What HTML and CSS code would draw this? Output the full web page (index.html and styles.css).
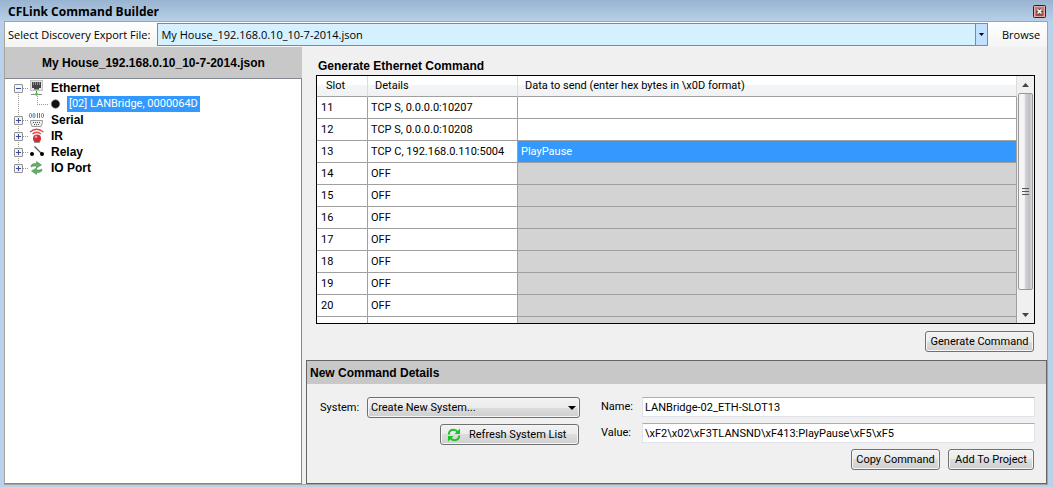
FILE: index.html
```html
<!DOCTYPE html>
<html lang="en">
<head>
  <meta charset="UTF-8">
  <meta name="viewport" content="width=device-width, initial-scale=1.0">
  <title>CFLink Command Builder</title>
  <link rel="stylesheet" href="styles.css">
</head>
<body>
  <header class="titlebar">
    <h1>CFLink Command Builder</h1>
    <button class="close" aria-label="Close">
      <svg width="13" height="13" viewBox="0 0 13 13">
        <rect x=".5" y=".5" width="12" height="12" rx="1" fill="#c08078" stroke="#42182a"/>
        <rect x="1.5" y="1.5" width="10" height="10" fill="none" stroke="#e0aaa0"/>
        <rect x="3" y="6" width="7" height="5" fill="#b04a38"/>
        <path d="M4.500 4.500l4 4M8.500 4.500l-4 4" stroke="#4a4a62" stroke-width="3.600"/>
        <path d="M4.500 4.500l4 4M8.500 4.500l-4 4" stroke="#fff" stroke-width="1.600"/>
      </svg>
    </button>
  </header>

  <div class="window">
    <div class="toolbar">
      <label for="file">Select Discovery Export File:</label>
      <div class="combo">
        <select id="file">
          <option>My House_192.168.0.10_10-7-2014.json</option>
        </select>
        <span class="combo-arrow"><svg width="5" height="3" viewBox="0 0 5 3"><path d="M0 0h5L2.500 3z"/></svg></span>
      </div>
      <button class="browse">Browse</button>
    </div>

    <div class="content">
      <aside class="sidebar">
        <h2>My House_192.168.0.10_10-7-2014.json</h2>
        <ul class="tree">
          <li>
            <div class="node">
              <button class="toggle open" aria-label="Collapse Ethernet"></button>
              <svg class="icon" width="16" height="16" viewBox="0 0 16 16">
                <rect x="1.500" y=".5" width="12" height="10" fill="#e4e4e4" stroke="#c4c4c4"/>
                <path d="M3 2h9v6h-2v1.500H5V8H3z" fill="#444"/>
                <path d="M4.500 2v3M6.500 2v3M8.500 2v3M10.500 2v3" stroke="#b09a70" stroke-width=".8"/>
                <path d="M7.500 11v3" stroke="#777"/>
                <path d="M2 14.500h11" stroke="#888"/>
                <path d="M7.500 12l2 2.500-2 1.500-2-1.500z" fill="#4cc940"/>
              </svg>
              <span>Ethernet</span>
            </div>
            <ul>
              <li>
                <div class="node child">
                  <svg class="icon" width="16" height="16" viewBox="0 0 16 16">
                    <circle cx="7.500" cy="8" r="4.200" fill="#111" stroke="#777" stroke-width=".6"/>
                  </svg>
                  <span class="selected">[02] LANBridge, 0000064D</span>
                </div>
              </li>
            </ul>
          </li>
          <li>
            <div class="node">
              <button class="toggle" aria-label="Expand Serial"></button>
              <svg class="icon" width="16" height="16" viewBox="0 0 16 16">
                <g fill="none" stroke="#2f95b5">
                  <rect x=".5" y="1.500" width="2" height="4" rx="1"/>
                  <rect x="4" y="1.500" width="2" height="4" rx="1"/>
                  <path d="M8.500 1v5M10.500 1v5"/>
                  <rect x="12.500" y="1.500" width="2" height="4" rx="1"/>
                </g>
                <path d="M1.500 8.500h12v2l-1.500 4H3l-1.500-4z" fill="#eee" stroke="#999"/>
                <path d="M4 10.500h8M5 12.500h6" stroke="#555" stroke-dasharray="1 1"/>
              </svg>
              <span>Serial</span>
            </div>
          </li>
          <li>
            <div class="node">
              <button class="toggle" aria-label="Expand IR"></button>
              <svg class="icon" width="16" height="16" viewBox="0 0 16 16">
                <path d="M1 4Q7.500-1.500 14.500 4M3.500 6Q7.500 2.500 12 6" fill="none" stroke="#e0484c" stroke-width="1.300"/>
                <circle cx="8" cy="10.500" r="4" fill="#d42c34"/>
                <circle cx="7" cy="8.800" r="1.400" fill="#f08c8c"/>
                <path d="M5 14.500h6" stroke="#999"/>
              </svg>
              <span>IR</span>
            </div>
          </li>
          <li>
            <div class="node">
              <button class="toggle" aria-label="Expand Relay"></button>
              <svg class="icon" width="16" height="16" viewBox="0 0 16 16">
                <path d="M5.500 2.500l7.500 7.500" stroke="#555" stroke-width="1.200"/>
                <circle cx="3" cy="10" r="2"/>
                <circle cx="13" cy="10" r="2"/>
              </svg>
              <span>Relay</span>
            </div>
          </li>
          <li>
            <div class="node">
              <button class="toggle" aria-label="Expand IO Port"></button>
              <svg class="icon" width="16" height="16" viewBox="0 0 16 16">
                <path d="M2 7C2 4 4 3.200 7.500 3.500V1.500L12.500 5 7.500 8V6C5 6 3.500 6 2 7z" fill="#68ae68" stroke="#398544" stroke-width=".5"/>
                <path d="M13 9C13 12 11 12.800 7.500 12.500v2L2.500 11 7.500 8v2C10 10 11.500 10 13 9z" fill="#68ae68" stroke="#398544" stroke-width=".5"/>
              </svg>
              <span>IO Port</span>
            </div>
          </li>
        </ul>
      </aside>

      <main>
        <section class="generate">
          <h2>Generate Ethernet Command</h2>
          <div class="grid">
            <div class="grid-view">
              <table>
                <colgroup><col class="col-slot"><col class="col-details"><col></colgroup>
                <thead>
                  <tr><th>Slot</th><th>Details</th><th>Data to send (enter hex bytes in \x0D format)</th></tr>
                </thead>
                <tbody>
                  <tr><td>11</td><td>TCP S, 0.0.0.0:10207</td><td></td></tr>
                  <tr><td>12</td><td>TCP S, 0.0.0.0:10208</td><td></td></tr>
                  <tr><td>13</td><td>TCP C, 192.168.0.110:5004</td><td class="active">PlayPause</td></tr>
                  <tr class="off"><td>14</td><td>OFF</td><td></td></tr>
                  <tr class="off"><td>15</td><td>OFF</td><td></td></tr>
                  <tr class="off"><td>16</td><td>OFF</td><td></td></tr>
                  <tr class="off"><td>17</td><td>OFF</td><td></td></tr>
                  <tr class="off"><td>18</td><td>OFF</td><td></td></tr>
                  <tr class="off"><td>19</td><td>OFF</td><td></td></tr>
                  <tr class="off"><td>20</td><td>OFF</td><td></td></tr>
                  <tr class="off"><td></td><td></td><td></td></tr>
                </tbody>
              </table>
            </div>
            <div class="scrollbar">
              <button aria-label="Scroll up"><svg width="7" height="4" viewBox="0 0 7 4"><path d="M0 4h7L3.500 0z" fill="#444"/></svg></button>
              <div class="thumb"><i></i><i></i><i></i></div>
              <button aria-label="Scroll down"><svg width="7" height="4" viewBox="0 0 7 4"><path d="M0 0h7L3.500 4z" fill="#444"/></svg></button>
            </div>
          </div>
          <button class="btn btn-generate">Generate Command</button>
        </section>

        <section class="details">
          <h2>New Command Details</h2>
          <div class="details-body">
            <div class="system">
              <label for="system">System:</label>
              <div class="select">
                <select id="system" class="btn">
                  <option>Create New System...</option>
                </select>
                <svg class="select-arrow" width="8" height="4" viewBox="0 0 8 4"><path d="M0 0h8L4 4z"/></svg>
              </div>
              <button class="btn btn-refresh">
                <svg width="14" height="14" viewBox="0 0 14 14">
                  <g fill="none" stroke="#1fc028" stroke-width="2">
                    <path d="M1.800 6.500C2 3 4 1.800 6.500 1.800c2 0 3.300.8 4.200 2.200"/>
                    <path d="M12.200 7.500C12 11 10 12.200 7.500 12.200c-2 0-3.300-.8-4.200-2.200"/>
                  </g>
                  <path d="M13 .5V6H7.500zM1 13.500V8h5.500z" fill="#1fc028"/>
                </svg>
                <span>Refresh System List</span>
              </button>
            </div>
            <div class="command">
              <label for="name">Name:</label>
              <input type="text" id="name" value="LANBridge-02_ETH-SLOT13">
              <label for="value">Value:</label>
              <input type="text" id="value" value="\xF2\x02\xF3TLANSND\xF413:PlayPause\xF5\xF5">
              <div class="actions">
                <button class="btn btn-copy">Copy Command</button>
                <button class="btn btn-add">Add To Project</button>
              </div>
            </div>
          </div>
        </section>
      </main>
    </div>
  </div>
</body>
</html>
```
FILE: styles.css
```css
* {
  box-sizing: border-box;
}

body {
  margin: 0;
  min-height: 100vh;
  padding: 0 5px 2px 4px;
  display: flex;
  flex-direction: column;
  background: #b9d1ea linear-gradient(#99b4d1, #b9d1ea 22px) no-repeat;
  color: #000;
  font-family: Roboto, "Liberation Sans", Arial, sans-serif;
  font-size: 11px;
  line-height: 14px;
}

h1, h2 {
  margin: 0;
  font-family: "Liberation Sans", Arial, sans-serif;
  font-size: 12px;
  line-height: 14px;
}

button, input, select {
  font: inherit;
  color: inherit;
  border-radius: 0;
  margin: 0;
}

button {
  padding: 0;
  border: 0;
  background: none;
}

/* Title bar */
.titlebar {
  display: flex;
  align-items: center;
  justify-content: space-between;
  height: 21px;
  padding: 2px 2px 0 4px;
}

.titlebar h1 {
  font-family: "Open Sans", sans-serif;
}

.close {
  display: flex;
}

.window {
  flex: 1;
  display: flex;
  flex-direction: column;
  border: 1px solid #a5a49c;
  background: #f0f0f0;
}

/* Toolbar */
.toolbar {
  display: flex;
  align-items: center;
  height: 25px;
  padding-left: 3px;
  background: linear-gradient(#fff, #f4f4f4);
  font-family: "Open Sans", sans-serif;
}

.combo {
  flex: 1;
  display: flex;
  height: 23px;
  margin-left: 7px;
  border: 1px solid #3399ff;
  background: #d5f1ff;
}

.combo select {
  flex: 1;
  appearance: none;
  border: 0;
  padding: 0 3px;
  background: none;
}

.combo-arrow {
  display: flex;
  align-items: center;
  justify-content: center;
  width: 12px;
  border-left: 1px solid #3399ff;
  background: #c2e0ff;
}

.browse {
  width: 59px;
  padding-left: 7px;
}

.content {
  flex: 1;
  display: flex;
}

/* Device tree */
.sidebar {
  display: flex;
  flex-direction: column;
  width: 297px;
}

.sidebar h2 {
  height: 31px;
  line-height: 32px;
  text-align: center;
  background: #c8c8c8;
}

.tree {
  flex: 1;
  border: 1px solid #828790;
  border-left: 0;
  background: #fff;
}

.tree, .tree ul {
  list-style: none;
  margin: 0;
  padding: 0;
}

.tree {
  padding: 1px 0 0 9px;
}

/* Dotted lines that join the nodes */
.tree > li {
  background: repeating-linear-gradient(#999 0 1px, transparent 1px 2px) 4px 0 / 1px 100% no-repeat;
}

.tree > li:first-child {
  background-position: 4px 8px;
  background-size: 1px 24px;
}

.tree > li:last-child {
  background-size: 1px 8px;
}

.node {
  display: flex;
  align-items: center;
  height: 16px;
  font-family: "Liberation Sans", Arial, sans-serif;
  font-size: 12px;
  font-weight: bold;
  background: repeating-linear-gradient(90deg, #999 0 1px, transparent 1px 2px) 9px 8px / 6px 1px no-repeat;
}

.toggle {
  display: flex;
  width: 9px;
  height: 9px;
  border: 1px solid #919191;
  border-radius: 1px;
  background:
    linear-gradient(#3a4ea0, #3a4ea0) center / 5px 1px no-repeat,
    linear-gradient(#3a4ea0, #3a4ea0) center / 1px 5px no-repeat,
    #f4f4f4;
}

.toggle.open {
  background: linear-gradient(#3a4ea0, #3a4ea0) center / 5px 1px no-repeat, #f4f4f4;
}

.icon {
  flex: none;
  margin-left: 6px;
}

.node span {
  padding: 0 6px;
}

.child {
  margin-left: 14px;
  padding-left: 14px;
  font-weight: normal;
  background:
    repeating-linear-gradient(#999 0 1px, transparent 1px 2px) 9px 0 / 1px 8px no-repeat,
    repeating-linear-gradient(90deg, #999 0 1px, transparent 1px 2px) 9px 8px / 12px 1px no-repeat;
}

.node .selected {
  margin-left: 3px;
  padding: 0 2px;
  line-height: 16px;
  font-family: Roboto, sans-serif;
  font-size: 11px;
  background: #3399ff;
  color: #fff;
}

/* Command table */
main {
  flex: 1;
  display: flex;
  flex-direction: column;
}

.generate {
  flex: 1;
  display: flex;
  flex-direction: column;
  padding: 12px 12px 8px 14px;
}

.generate h2 {
  padding-left: 2px;
  margin-bottom: 2px;
}

.grid {
  flex: 1 0 200px;
  display: flex;
  border: 1px solid #000;
}

.grid-view {
  flex: 1;
  height: 0;
  min-height: 100%;
  overflow: hidden;
}

table {
  width: 100%;
  table-layout: fixed;
  border-collapse: separate;
  border-spacing: 0;
}

.col-slot {
  width: 51px;
}

.col-details {
  width: 150px;
}

th, td {
  height: 22px;
  padding: 0 3px;
  border-right: 1px solid #a0a0a0;
  border-bottom: 1px solid #a0a0a0;
  text-align: left;
  font-weight: normal;
  background: #fff;
}

th {
  height: 21px;
  padding: 0 7px;
  border-right-color: #dcdcdc;
  background: linear-gradient(#fff 45%, #f4f5f7 45%, #f1f2f4);
}

th:first-child {
  padding-left: 9px;
}

td:first-child {
  padding-left: 4px;
}

.off td:last-child {
  background: #d3d3d3;
}

td.active {
  background: #3399ff;
  color: #fff;
}

.scrollbar {
  display: flex;
  flex-direction: column;
  width: 17px;
  background: #f0f0f0;
}

.scrollbar button {
  display: flex;
  align-items: center;
  justify-content: center;
  height: 17px;
}

.scrollbar .thumb {
  flex: 1;
  display: flex;
  flex-direction: column;
  align-items: center;
  justify-content: center;
  gap: 2px;
  margin: 0 1px 16px;
  border: 1px solid #979797;
  border-radius: 2px;
  background: linear-gradient(90deg, #f5f5f5 40%, #d2d2d6 50%, #bfc0c4 80%, #dcdcde);
}

.thumb i {
  width: 7px;
  height: 1px;
  background: #555;
}

.btn {
  height: 21px;
  border: 1px solid #707070;
  border-radius: 3px;
  background: linear-gradient(#f2f2f2, #ebebeb 50%, #dddddd 50%, #cfcfcf);
  box-shadow: inset 0 0 0 1px #f6f6f6;
}

.btn-generate {
  align-self: flex-end;
  width: 109px;
  margin: 7px 1px 0 0;
}

/* New command form */
.details {
  margin-left: 4px;
  border: 1px solid #646464;
}

.details h2 {
  height: 23px;
  padding-left: 3px;
  line-height: 24px;
  background: #c8c8c8;
}

.details-body {
  display: flex;
  gap: 21px;
  padding: 13px 11px 13px 13px;
}

.system {
  display: grid;
  grid-template-columns: 47px 213px;
  grid-template-rows: 21px 21px;
  row-gap: 6px;
  align-items: center;
}

.select {
  position: relative;
}

.select select {
  display: block;
  width: 100%;
  appearance: none;
  padding: 0 3px;
}

.select-arrow {
  position: absolute;
  right: 4px;
  top: 9px;
}

.btn-refresh {
  grid-column: 2;
  justify-self: end;
  display: flex;
  align-items: center;
  gap: 8px;
  width: 139px;
  margin-right: 1px;
  padding-left: 6px;
}

.command {
  flex: 1;
  display: grid;
  grid-template-columns: 41px 1fr;
  grid-template-rows: 20px 20px 21px;
  row-gap: 6px;
  align-items: center;
}

.command input {
  width: 100%;
  height: 20px;
  padding: 0 2px;
  border: 1px solid #e2e3ea;
  border-top-color: #abadb3;
  background: #fff;
}

.actions {
  grid-column: 2;
  display: flex;
  justify-content: flex-end;
  gap: 8px;
  padding-right: 1px;
}

.btn-copy {
  width: 89px;
}

.btn-add {
  width: 86px;
}
```
